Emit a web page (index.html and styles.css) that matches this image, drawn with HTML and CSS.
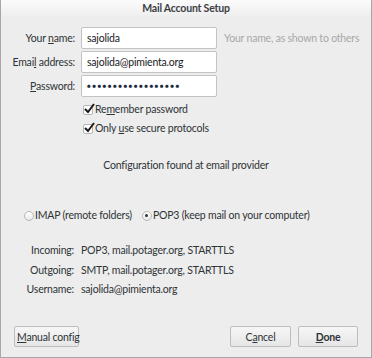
FILE: index.html
```html
<!DOCTYPE html>
<html lang="en">
<head>
  <meta charset="UTF-8" />
  <title>Mail Account Setup</title>
  <link rel="stylesheet" href="styles.css">
</head>
<body>
  <div class="window">
    <div class="titlebar">Mail Account Setup</div>

    <div class="fields">
      <label class="label">Your <u>n</u>ame:</label>
      <div class="input">sajolida</div>
      <div class="hint">Your name, as shown to others</div>

      <label class="label">Emai<u>l</u> address:</label>
      <div class="input">sajolida@pimienta.org</div>
      <div></div>

      <label class="label"><u>P</u>assword:</label>
      <div class="input dots">●●●●●●●●●●●●●●●●●●</div>
      <div></div>
    </div>

    <div class="checks">
      <div class="check"><span class="box"><svg width="12" height="12" viewBox="0 0 12 12"><path d="M2 6 L5 9 L11 1" fill="none" stroke="#1a1a1a" stroke-width="2"/></svg></span>Re<u>m</u>ember password</div>
      <div class="check"><span class="box"><svg width="12" height="12" viewBox="0 0 12 12"><path d="M2 6 L5 9 L11 1" fill="none" stroke="#1a1a1a" stroke-width="2"/></svg></span>Only&nbsp;<u>u</u>se secure protocols</div>
    </div>

    <div class="status">Configuration found at email provider</div>

    <div class="protocols">
      <div class="radio"><span class="dot"></span>IMAP (remote folders)</div>
      <div class="radio"><span class="dot on"></span>POP3 (keep mail on your computer)</div>
    </div>

    <div class="details">
      <div class="key">Incoming:</div>
      <div>POP3, mail.potager.org, STARTTLS</div>
      <div class="key">Outgoing:</div>
      <div>SMTP, mail.potager.org, STARTTLS</div>
      <div class="key">Username:</div>
      <div>sajolida@pimienta.org</div>
    </div>

    <div class="buttons">
      <button class="btn manual"><u>M</u>anual config</button>
      <div class="spacer"></div>
      <button class="btn cancel">C<u>a</u>ncel</button>
      <button class="btn done"><u>D</u>one</button>
    </div>
  </div>
</body>
</html>
```

FILE: styles.css
```css
body {
  margin: 0;
  background-color: #ededed;
  font-family: 'Lato', 'DejaVu Sans', sans-serif;
  font-size: 10.5px;
  letter-spacing: -0.2px;
  line-height: 13px;
  color: #2e3436;
}

.window {
  width: 372px;
  height: 358px;
  box-sizing: border-box;
  border: 1px solid #a7a7a7;
  border-top: none;
  background-color: #ededed;
  display: flex;
  flex-direction: column;
}

.titlebar {
  height: 18px;
  line-height: 16px;
  text-align: center;
  font-weight: bold;
  color: #3c4044;
  background: linear-gradient(#fbfbfb, #ededed);
}

u {
  text-decoration: underline;
  text-underline-offset: 1px;
}

.fields {
  display: grid;
  grid-template-columns: 74px 136px auto;
  column-gap: 6px;
  row-gap: 2px;
  align-items: center;
  margin-top: 9px;
}

.label {
  text-align: right;
  white-space: nowrap;
}

.input {
  height: 22px;
  box-sizing: border-box;
  border: 1px solid #c3c3c3;
  border-radius: 2px;
  background-color: #fff;
  padding: 0 5px;
  line-height: 20px;
  color: #1a1a1a;
  white-space: nowrap;
  overflow: hidden;
}

.dots {
  font-size: 6.5px;
  letter-spacing: 1.3px;
  color: #1c2a3a;
}

.hint {
  color: #a8a8a8;
  white-space: nowrap;
  padding-left: 1px;
}

.checks {
  display: flex;
  flex-direction: column;
  gap: 6px;
  margin: 6px 0 0 82px;
}

.check {
  display: flex;
  align-items: center;
  height: 13px;
}

.box {
  width: 10px;
  height: 10px;
  box-sizing: border-box;
  border: 1px solid #b5b5b5;
  background: #fff;
  border-radius: 2px;
  position: relative;
  margin-right: 2px;
}

.box svg {
  position: absolute;
  left: -1px;
  top: -3px;
}

.status {
  text-align: center;
  margin-top: 24px;
}

.protocols {
  display: flex;
  gap: 10px;
  margin: 37px 0 0 23px;
}

.radio {
  display: flex;
  align-items: center;
}

.dot {
  width: 10px;
  height: 10px;
  box-sizing: border-box;
  border: 1px solid #b8b8b8;
  border-radius: 50%;
  background: linear-gradient(#ffffff, #e8e8e8);
  margin-right: 1px;
  display: flex;
  align-items: center;
  justify-content: center;
}

.dot.on::after {
  content: "";
  width: 3px;
  height: 3px;
  border-radius: 50%;
  background: #2e3436;
}

.details {
  display: grid;
  grid-template-columns: 73px auto;
  column-gap: 7px;
  row-gap: 6.5px;
  margin-top: 22px;
}

.key {
  text-align: right;
}

.buttons {
  display: flex;
  align-items: center;
  margin-top: auto;
  padding: 0 13px 10px 13px;
}

.spacer {
  flex: 1;
}

.btn {
  height: 21px;
  box-sizing: border-box;
  border: 1px solid #bdbdbd;
  border-radius: 2px;
  background: linear-gradient(#f6f6f6, #e6e6e6);
  font-family: inherit;
  font-size: 10.5px;
  letter-spacing: -0.2px;
  color: #2e3436;
  padding: 0 2px;
  white-space: nowrap;
}

.manual {
  width: 65px;
}

.cancel {
  width: 61px;
  margin-right: 7px;
}

.done {
  width: 60px;
  font-weight: bold;
}
```
